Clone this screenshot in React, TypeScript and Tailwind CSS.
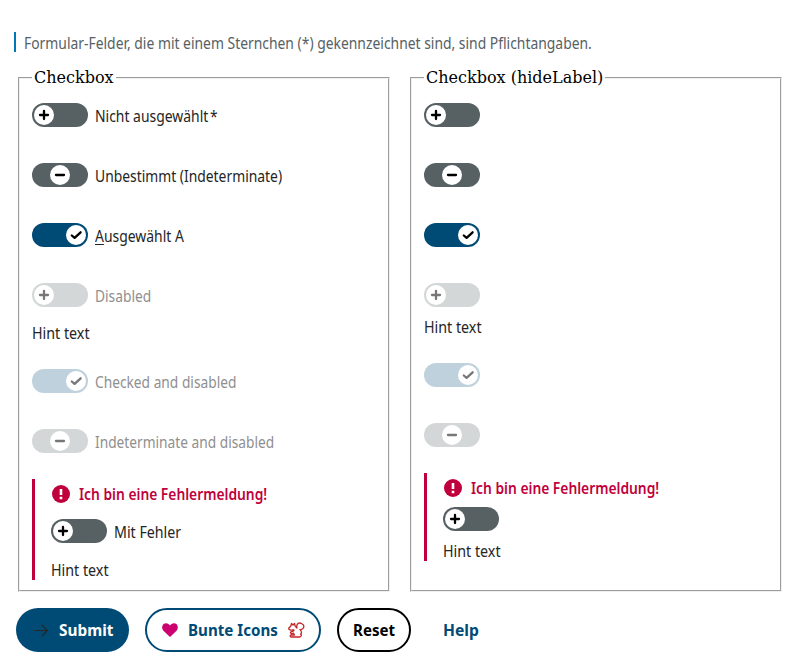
import { useLayoutEffect, useRef, useState } from 'react';

type SwitchState = 'off' | 'mixed' | 'on';

/* Single line of text that is fitted to a given width. */
function Line({ w, className = '', children }: { w: number; className?: string; children: React.ReactNode }) {
  const ref = useRef<HTMLSpanElement>(null);
  const [scale, setScale] = useState(1);
  useLayoutEffect(() => {
    if (ref.current) setScale(w / ref.current.offsetWidth);
  }, [w]);
  return (
    <span className={`block shrink-0 whitespace-nowrap ${className}`} style={{ width: w }}>
      <span ref={ref} className="inline-block origin-left" style={{ transform: `scaleX(${scale})` }}>
        {children}
      </span>
    </span>
  );
}

function Switch({ state, disabled = false }: { state: SwitchState; disabled?: boolean }) {
  const track = state === 'on' ? (disabled ? 'bg-[#bfd1dd]' : 'bg-[#004b76]') : disabled ? 'bg-[#d3d7d7]' : 'bg-[#576164]';
  const place = state === 'on' ? 'justify-end' : state === 'mixed' ? 'justify-center' : 'justify-start';
  return (
    <span className={`flex h-6 w-14 shrink-0 items-center rounded-full px-0.5 ${track} ${place}`}>
      <span className="flex size-5 items-center justify-center rounded-full bg-white">
        <svg viewBox="0 0 20 20" className="size-5" fill="none" stroke={disabled ? '#777' : '#000'} strokeWidth="2.3" strokeLinecap="round" strokeLinejoin="round">
          {state === 'off' && <path d="M6 10h8M10 6v8" />}
          {state === 'mixed' && <path d="M6 10h8" />}
          {state === 'on' && <path d="M5.800 10.500l2.800 2.400 6-5.600" />}
        </svg>
      </span>
    </span>
  );
}

function Row({ state, disabled, label, w = 0 }: { state: SwitchState; disabled?: boolean; label?: React.ReactNode; w?: number }) {
  return (
    <div className="flex h-12 items-center gap-[7px]">
      <Switch state={state} disabled={disabled} />
      {label && (
        <Line w={w} className={disabled ? 'pt-px text-[#8f8f8f]' : 'pt-px'}>
          {label}
        </Line>
      )}
    </div>
  );
}

function ErrorTitle() {
  return (
    <div className="flex h-[30px] items-center gap-2 font-semibold text-[#c0003c]">
      <svg viewBox="0 0 20 20" className="size-5">
        <circle cx="10" cy="10" r="9" fill="#c0003c" />
        <path d="M10 5v6M10 12.700v2.500" stroke="#fff" strokeWidth="2.6" />
      </svg>
      <Line w={188}>Ich bin eine Fehlermeldung!</Line>
    </div>
  );
}

function Group({ title, children }: { title: string; children: React.ReactNode }) {
  return (
    <fieldset className="mx-0.5 min-w-0 border-2 border-[#f0f0f0] px-3 pt-1 [border-style:groove]">
      <legend className="px-0.5 font-['DejaVu_Serif',serif] text-base leading-[19px] text-black">{title}</legend>
      {children}
    </fieldset>
  );
}

export default function App() {
  return (
    <main className="h-[668px] w-[800px] bg-white pt-8 font-['Noto_Sans',sans-serif] text-[15.5px] leading-5 text-[#252525]">
      <p className="ml-3.5 flex h-5 items-center border-l-2 border-[#0077b6] pl-2 text-[#576164]">
        <Line w={568} className="pt-px">
          Formular-Felder, die mit einem Sternchen (*) gekennzeichnet sind, sind Pflichtangaben.
        </Line>
      </p>

      <div className="mx-4 mt-4 grid h-[524px] grid-cols-2 gap-4">
        <Group title="Checkbox">
          <div className="flex flex-col gap-3">
            <Row state="off" label={<>Nicht ausgewählt<span className="ml-0.5">*</span></>} w={123} />
            <Row state="mixed" label="Unbestimmt (Indeterminate)" w={187} />
            <Row state="on" label={<><span className="underline underline-offset-2">A</span>usgewählt A</>} w={89} />
            <Row state="off" disabled label="Disabled" w={56} />
          </div>
          <Line w={58} className="mt-1 mb-3.5">Hint text</Line>
          <div className="flex flex-col gap-3">
            <Row state="on" disabled label="Checked and disabled" w={141} />
            <Row state="mixed" disabled label="Indeterminate and disabled" w={179} />
          </div>
          <div className="mt-3.5 h-[101px] border-l-[3px] border-[#c0003c] pl-4">
            <ErrorTitle />
            <div className="-mt-0.5">
              <Row state="off" label="Mit Fehler" w={67} />
            </div>
            <Line w={58} className="mt-[5px]">Hint text</Line>
          </div>
        </Group>

        <Group title="Checkbox (hideLabel)">
          <div className="flex flex-col gap-3">
            <Row state="off" />
            <Row state="mixed" />
            <Row state="on" />
            <Row state="off" disabled />
          </div>
          <Line w={58} className="-mt-0.5 mb-3.5">Hint text</Line>
          <div className="flex flex-col gap-3">
            <Row state="on" disabled />
            <Row state="mixed" disabled />
          </div>
          <div className="mt-3.5 h-[88px] border-l-[3px] border-[#c0003c] pl-4">
            <ErrorTitle />
            <div className="mt-1">
              <Switch state="off" />
            </div>
            <Line w={58} className="mt-2.5">Hint text</Line>
          </div>
        </Group>
      </div>

      <div className="mt-4 ml-4 flex gap-4 text-[16.5px] font-bold text-[#004b76]">
        <button className="flex h-11 w-[113px] items-center rounded-full bg-[#004b76] pl-4 text-white">
          <svg viewBox="0 0 20 20" className="mr-[7px] size-5" fill="none" stroke="#252525" strokeWidth="1.1">
            <path d="M2 10.5h13.5M9.8 5l5.7 5.5L9.8 16" />
          </svg>
          <Line w={54}>Submit</Line>
        </button>
        <button className="flex h-11 w-44 items-center rounded-full border-2 border-[#004b76] pl-3.5">
          <svg viewBox="0 0 20 20" className="mr-[7px] size-5" fill="#cc006e">
            <path d="M9 17L2.200 10.400C.1 8 1.300 3.300 5 3.300c1.800 0 3.200 1 4 2.300.8-1.300 2.200-2.300 4-2.300 3.700 0 4.900 4.700 2.800 7.100z" />
          </svg>
          <Line w={90}>Bunte Icons</Line>
          <svg viewBox="0 0 20 20" className="ml-2 size-5" fill="none" stroke="#c4252b" strokeWidth="1.3" strokeLinejoin="round">
            <path d="M5.500 3.500L7 5l1.500-1.500.5 2.200 2 2.300c-.9-3 .5-5 2.700-5 1.300 0 1.600.8 2.600 1.100 1.900.6 1.900 3 .8 4.300-.9 1.100-2 1.300-3.200 1.200 1.800 1.500 2 3.300.7 4.700l.8.500c-.1 1.400-.9 2.200-2.200 2.200H5.500c-1.800 0-1.700-2-.2-2h3.200l-1-1.800-2 .4c-1.300-.2-1.300-1.500-.4-1.800l2.600-.8.2-1.200-2.800.3C3.400 9.900 2.400 9.200 2.700 8.200L5 5.800z" />
          </svg>
        </button>
        <button className="flex h-11 w-[74px] items-center rounded-full border-2 border-black pl-3.5 text-black">
          <Line w={42}>Reset</Line>
        </button>
        <button className="flex h-11 items-center px-4">
          <Line w={36}>Help</Line>
        </button>
      </div>
    </main>
  );
}
